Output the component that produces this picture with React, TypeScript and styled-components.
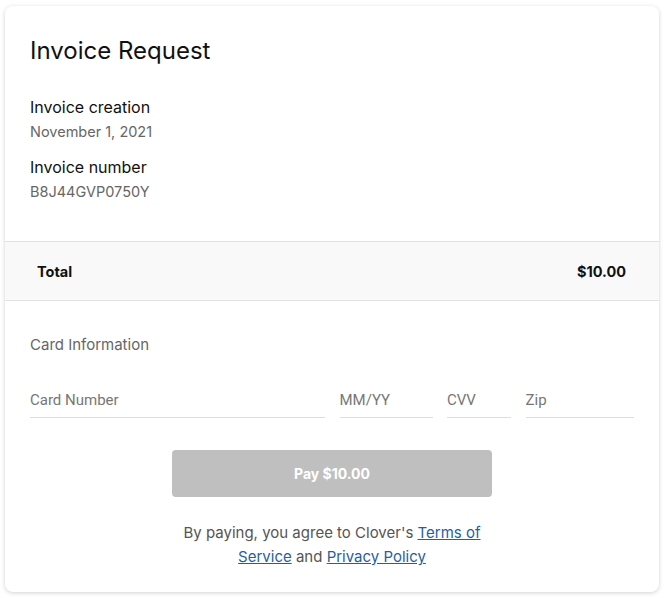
import React from "react";
import styled, { createGlobalStyle } from "styled-components";

const GlobalStyle = createGlobalStyle`
  body {
    margin: 0;
    background: #ffffff;
    font-family: Inter, "Noto Sans", sans-serif;
  }
`;

const Page = styled.div`
  padding: 6px 6px 6px 5px;
`;

const Card = styled.div`
  width: 654px;
  background: #fff;
  border-radius: 8px;
  box-shadow: 0 1px 4px rgba(0, 0, 0, 0.18);
  overflow: hidden;
`;

const Header = styled.div`
  padding: 29px 25px 37px;
`;

const Title = styled.h1`
  margin: 0 0 28px;
  font-size: 24px;
  line-height: 32px;
  font-weight: 400;
  color: #111;
`;

const Field = styled.div`
  margin-bottom: 11px;
  &:last-child {
    margin-bottom: 0;
  }
`;

const Label = styled.div`
  font-size: 16px;
  line-height: 24px;
  color: #111;
`;

const Value = styled.div`
  font-size: 14.5px;
  line-height: 24px;
  color: #666;
  margin-top: 1px;
`;

const TotalBand = styled.div`
  display: flex;
  justify-content: space-between;
  align-items: center;
  height: 58px;
  padding: 0 33px 0 32px;
  background: #f9f9f9;
  border-top: 1px solid #e2e2e2;
  border-bottom: 1px solid #e2e2e2;
  font-size: 14.5px;
  font-weight: 700;
  color: #111;
`;

const CardSection = styled.div`
  padding: 34px 25px 0;
`;

const SectionTitle = styled.div`
  font-size: 15px;
  line-height: 20px;
  color: #666;
`;

const Inputs = styled.div`
  display: flex;
  gap: 14.5px;
  margin-top: 35px;
`;

const Input = styled.input<{ $w: number }>`
  width: ${(p) => p.$w}px;
  box-sizing: border-box;
  border: none;
  border-bottom: 1px solid #dedede;
  padding: 0 0 7px;
  background: transparent;
  font-family: Roboto, sans-serif;
  font-size: 15px;
  line-height: 20px;
  outline: none;
  &::placeholder {
    color: #777;
  }
`;

const PayButton = styled.button`
  display: block;
  width: 320px;
  height: 47px;
  margin: 32px auto 0;
  border: none;
  border-radius: 4px;
  background: #bfbfbf;
  color: #fff;
  font-family: Inter, sans-serif;
  font-size: 14px;
  font-weight: 700;
`;

const Agreement = styled.p`
  width: 320px;
  margin: 24px auto 0;
  padding-bottom: 23px;
  text-align: center;
  font-size: 15px;
  line-height: 24px;
  color: #555;
`;

const Link = styled.a`
  color: #1f5fa3;
  text-decoration: underline;
`;

export default function App() {
  return (
    <Page>
      <GlobalStyle />
      <Card>
        <Header>
          <Title>Invoice Request</Title>
          <Field>
            <Label>Invoice creation</Label>
            <Value>November 1, 2021</Value>
          </Field>
          <Field>
            <Label>Invoice number</Label>
            <Value>B8J44GVP0750Y</Value>
          </Field>
        </Header>
        <TotalBand>
          <span>Total</span>
          <span>$10.00</span>
        </TotalBand>
        <CardSection>
          <SectionTitle>Card Information</SectionTitle>
          <Inputs>
            <Input $w={295} placeholder="Card Number" />
            <Input $w={93} placeholder="MM/YY" />
            <Input $w={64} placeholder="CVV" />
            <Input $w={108} placeholder="Zip" />
          </Inputs>
          <PayButton disabled>Pay $10.00</PayButton>
          <Agreement>
            By paying, you agree to Clover's <Link href="#">Terms of Service</Link> and{" "}
            <Link href="#">Privacy Policy</Link>
          </Agreement>
        </CardSection>
      </Card>
    </Page>
  );
}
